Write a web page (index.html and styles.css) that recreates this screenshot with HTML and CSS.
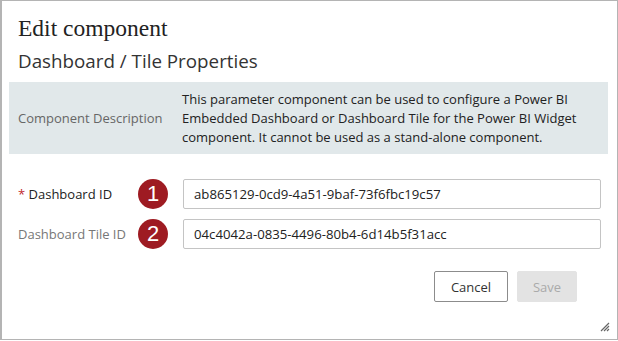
FILE: index.html
```html
<!DOCTYPE html>
<html>
<head>
    <title>Edit component</title>
    <link rel="stylesheet" href="styles.css">
</head>
<body>
    <div class="dialog">
        <h1 class="title">Edit component</h1>
        <h2 class="subtitle">Dashboard / Tile Properties</h2>

        <div class="description">
            <div class="desc-label">Component Description</div>
            <div class="desc-text">This parameter component can be used to configure a Power BI Embedded Dashboard or Dashboard Tile for the Power BI Widget component. It cannot be used as a stand-alone component.</div>
        </div>

        <form class="fields">
            <div class="field">
                <label class="field-label required" for="dashboardId"><span class="star">*</span> Dashboard ID</label>
                <span class="badge">1</span>
                <input class="field-input" type="text" id="dashboardId" value="ab865129-0cd9-4a51-9baf-73f6fbc19c57">
            </div>
            <div class="field">
                <label class="field-label" for="tileId">Dashboard Tile ID</label>
                <span class="badge">2</span>
                <input class="field-input" type="text" id="tileId" value="04c4042a-0835-4496-80b4-6d14b5f31acc">
            </div>
        </form>

        <div class="actions">
            <button type="button" class="btn btn-cancel">Cancel</button>
            <button type="button" class="btn btn-save" disabled>Save</button>
        </div>

        <svg class="grip" width="10" height="10" viewBox="0 0 10 10">
            <path d="M9 1 L1 9 M9 4 L4 9 M9 7 L7 9" stroke="#666" stroke-width="1.2" fill="none"/>
        </svg>
    </div>
</body>
</html>
```

FILE: styles.css
```css
body {
    margin: 0;
    padding: 0;
    background-color: #ffffff;
    font-family: "Open Sans", "Noto Sans", sans-serif;
}

.dialog {
    position: relative;
    box-sizing: border-box;
    width: 618px;
    height: 340px;
    border: 1px solid #b4b4b4;
    border-left-width: 2px;
    padding: 13px 9px 0 7px;
}

.title {
    margin: 0 0 0 9px;
    font-family: "Liberation Serif", serif;
    font-weight: normal;
    font-size: 23.5px;
    line-height: 28px;
    color: #222;
}

.subtitle {
    margin: 7px 0 0 9px;
    font-weight: normal;
    font-size: 18.8px;
    line-height: 25px;
    color: #333;
}

.description {
    display: flex;
    align-items: center;
    margin-top: 8px;
    padding: 8px 9px 7px;
    background-color: #e1e8ea;
    font-size: 13px;
    line-height: 19px;
}

.desc-label {
    width: 164px;
    flex-shrink: 0;
    color: #666;
}

.desc-text {
    color: #222;
}

.fields {
    margin: 25px 0 0 9px;
}

.field {
    display: flex;
    align-items: center;
    margin-bottom: 10px;
}

.field-label {
    width: 120px;
    font-size: 13px;
    color: #777;
}

.field-label.required {
    color: #222;
}

.star {
    color: #c0282e;
}

.badge {
    width: 30px;
    height: 30px;
    border-radius: 50%;
    background-color: #9e1b22;
    color: #fff;
    font-family: "Liberation Sans", sans-serif;
    font-size: 22px;
    line-height: 30px;
    text-align: center;
    margin-right: 15px;
}

.field-input {
    box-sizing: border-box;
    width: 418px;
    height: 30px;
    border: 1px solid #c4c4c4;
    border-radius: 2px;
    padding: 0 10px;
    font-family: "Open Sans", "Noto Sans", sans-serif;
    font-size: 13.2px;
    color: #222;
}

.actions {
    display: flex;
    justify-content: flex-end;
    gap: 9px;
    margin: 22px 31px 0 0;
}

.btn {
    height: 31px;
    border-radius: 2px;
    font-family: "Open Sans", "Noto Sans", sans-serif;
    font-size: 13px;
}

.btn-cancel {
    width: 74px;
    background-color: #fff;
    border: 1px solid #8c8c8c;
    color: #333;
}

.btn-save {
    width: 60px;
    background-color: #e3e3e3;
    border: 1px solid #e3e3e3;
    color: #aaa;
}

.grip {
    position: absolute;
    right: 7px;
    bottom: 7px;
}
```
